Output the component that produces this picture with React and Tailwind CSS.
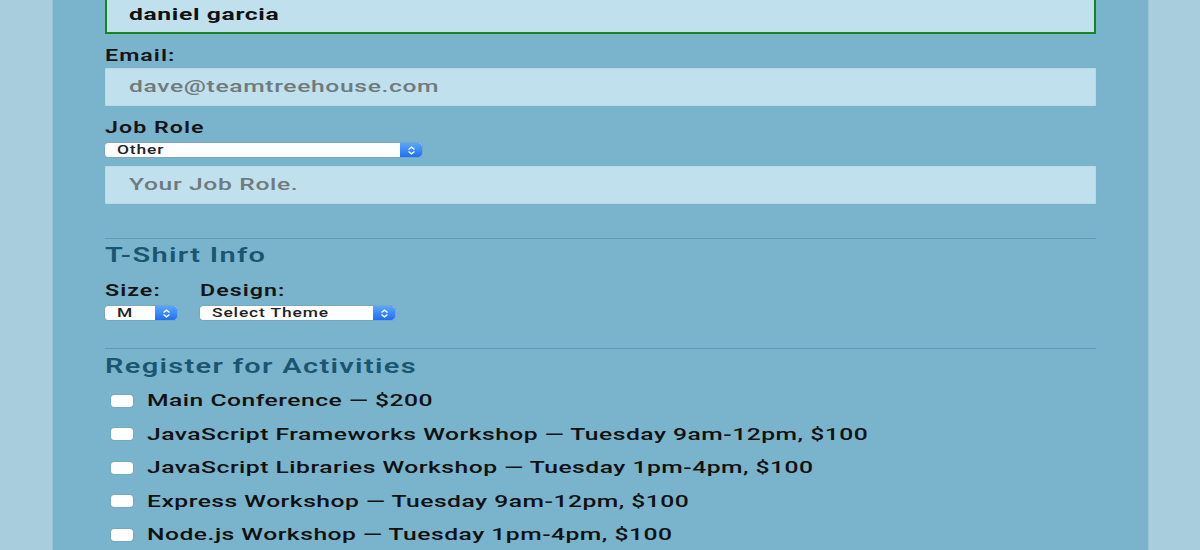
import { useState } from 'react';

const ACTIVITIES = [
    'Main Conference — $200',
    'JavaScript Frameworks Workshop — Tuesday 9am-12pm, $100',
    'JavaScript Libraries Workshop — Tuesday 1pm-4pm, $100',
    'Express Workshop — Tuesday 9am-12pm, $100',
    'Node.js Workshop — Tuesday 1pm-4pm, $100',
];

// the screenshot is stretched sideways, so text gets widened too
const WIDE = 'inline-block origin-left scale-x-[1.45] whitespace-nowrap';

function FakeSelect({ value, width }) {
    return (
        <div className={`flex h-[14px] ${width} rounded-[3px] bg-white shadow-[0_0_1px_rgba(0,0,0,0.5)] overflow-hidden`}>
            <span className="flex-1 pl-[12px] text-[12px] leading-[14px] font-medium tracking-[0.05em] text-[#222]">
                <span className={WIDE}>{value}</span>
            </span>
            <span className="flex w-[22px] items-center justify-center rounded-r-[3px] bg-gradient-to-b from-[#5aa5ff] to-[#1f6ef5]">
                <svg width="9" height="9" viewBox="0 0 9 9" fill="none" stroke="white" strokeWidth="1.4">
                    <path d="M1.5 3.5 4.5 1.2 7.5 3.5" />
                    <path d="M1.5 5.5 4.5 7.8 7.5 5.5" />
                </svg>
            </span>
        </div>
    );
}

export default function App() {
    const [checked, setChecked] = useState({});

    return (
        <div className="flex h-[550px] w-[1200px] overflow-hidden bg-[#a8cddc] font-['Roboto',_'Liberation_Sans',_sans-serif]">
            <div className="w-[53px] border-r border-[#9cc6d7]" />
            <main className="flex-1 bg-[#7ab4cc] px-[52px]">
                {/* Basic info */}
                <div className="-mt-[6px] flex h-[40px] items-center border-2 border-[#12871a] bg-[#bfe0ec] pl-[22px] pt-[2px] text-[17px] font-bold tracking-[0.026em] text-[#111]">
                    <span className={WIDE}>daniel garcia</span>
                </div>
                <label className="mt-[10px] block text-[16px] font-semibold tracking-[0.045em] text-[#151515]">
                    <span className={WIDE}>Email:</span>
                </label>
                <div className="flex h-[38px] items-center bg-[#bfe0ec] pl-[24px] text-[17px] font-medium tracking-[0.026em] text-[#6f7a7e] shadow-[inset_0_0_1px_rgba(90,150,180,0.8)]">
                    <span className={WIDE}>dave@teamtreehouse.com</span>
                </div>
                <label className="mt-[10px] block text-[16px] font-semibold tracking-[0.045em] text-[#151515]">
                    <span className={WIDE}>Job Role</span>
                </label>
                <div className="mt-[3px]">
                    <FakeSelect value="Other" width="w-[317px]" />
                </div>
                <div className="mt-[9px] flex h-[38px] items-center bg-[#bfe0ec] pl-[24px] text-[17px] font-medium tracking-[0.026em] text-[#6f7a7e] shadow-[inset_0_0_1px_rgba(90,150,180,0.8)]">
                    <span className={WIDE}>Your Job Role.</span>
                </div>

                {/* T-Shirt */}
                <hr className="mt-[34px] border-0 border-t border-[#5d9cb8]" />
                <h2 className="mt-[1px] text-[20px] font-semibold tracking-[0.045em] text-[#1a5672]">
                    <span className={WIDE}>T-Shirt Info</span>
                </h2>
                <div className="mt-[9px] flex gap-[23px]">
                    <div>
                        <label className="block text-[16px] font-semibold tracking-[0.045em] text-[#151515]">
                            <span className={WIDE}>Size:</span>
                        </label>
                        <div className="mt-[3px]">
                            <FakeSelect value="M" width="w-[72px]" />
                        </div>
                    </div>
                    <div>
                        <label className="block text-[16px] font-semibold tracking-[0.045em] text-[#151515]">
                            <span className={WIDE}>Design:</span>
                        </label>
                        <div className="mt-[3px]">
                            <FakeSelect value="Select Theme" width="w-[195px]" />
                        </div>
                    </div>
                </div>

                {/* Activities */}
                <hr className="mt-[28px] border-0 border-t border-[#5d9cb8]" />
                <h2 className="mt-[2px] text-[20px] font-semibold tracking-[0.045em] text-[#1a5672]">
                    <span className={WIDE}>Register for Activities</span>
                </h2>
                <div className="mt-[3px] flex flex-col">
                    {ACTIVITIES.map((a, i) => (
                        <label key={a} className="flex h-[33.5px] items-center gap-[14px] pl-[6px] text-[17px] font-medium tracking-[0.02em] text-[#111]">
                            <span
                                onClick={() => setChecked({ ...checked, [i]: !checked[i] })}
                                className="h-[12px] w-[22px] shrink-0 rounded-[3px] bg-white shadow-[0_0_1px_rgba(0,0,0,0.5)]"
                            />
                            <span className={WIDE}>{a}</span>
                        </label>
                    ))}
                </div>
            </main>
            <div className="w-[52px] border-l border-[#9cc6d7]" />
        </div>
    );
}
